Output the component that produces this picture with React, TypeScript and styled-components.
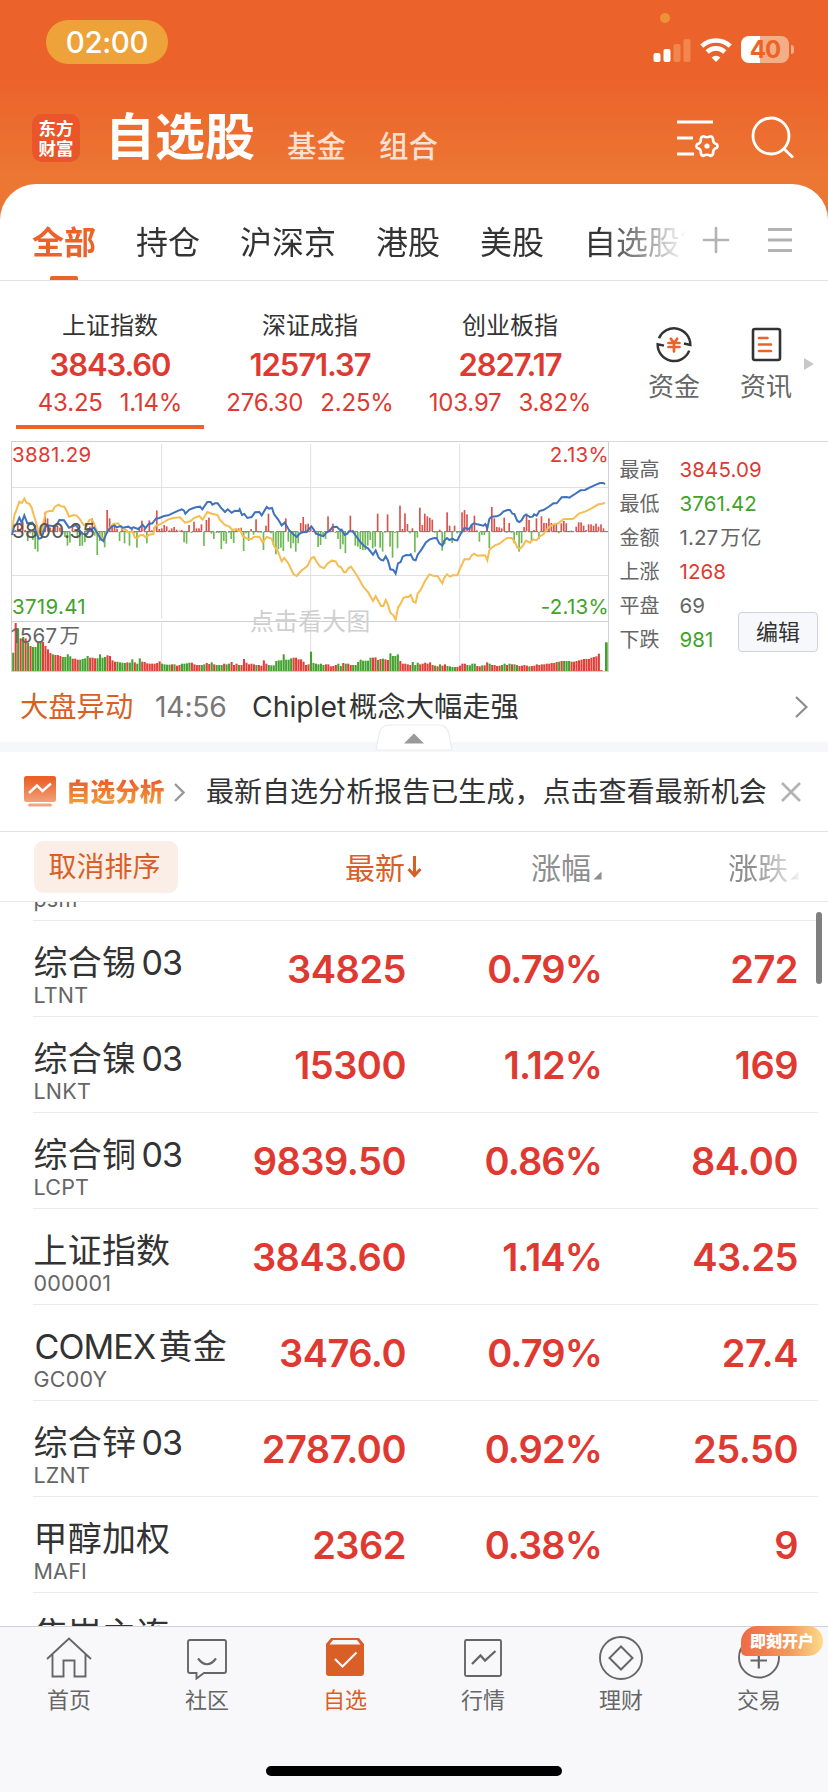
import React from 'react';
import styled, { createGlobalStyle } from 'styled-components';

const RED = '#df3a32';
const GREEN = '#42a22c';
const ORANGE = '#ec632a';
const DEEP = '#d95f27';

const Global = createGlobalStyle`
  * { box-sizing: border-box; }
  html, body { margin: 0; padding: 0; }
  body {
    width: 828px;
    height: 1792px;
    overflow: hidden;
    background: #fff;
    color: #333;
    font-family: Inter, 'Noto Sans CJK SC', sans-serif;
    font-feature-settings: 'calt' 0;
  }
  svg { display: block; flex: none; }
`;

const Screen = styled.div`
  width: 828px;
  height: 1792px;
  display: flex;
  flex-direction: column;
  overflow: hidden;
  background: linear-gradient(#ec622b 0, #ec622b 78px, #ec7733 178px, #ec7733 230px, #fff 230px);
`;

/* ---------- status bar and title bar ---------- */

const StatusBar = styled.div`
  position: relative;
  height: 84px;
  flex: none;
  display: flex;
  align-items: flex-start;
  padding: 20px 34px 0 46px;
`;

const TimePill = styled.div`
  width: 122px;
  height: 44px;
  border-radius: 22px;
  background: #eda23a;
  color: #fff;
  font-size: 29.5px;
  font-weight: 500;
  line-height: 45px;
  letter-spacing: -0.4px;
  text-align: center;
`;

const PrivacyDot = styled.i`
  position: absolute;
  left: 660px;
  top: 13px;
  width: 10px;
  height: 10px;
  border-radius: 50%;
  background: #ee9334;
`;

const StatusIcons = styled.div`
  margin-left: auto;
  display: flex;
  align-items: center;
  padding-top: 16px;
  gap: 9px;
`;

const Battery = styled.div`
  display: flex;
  align-items: center;
  gap: 2px;
`;

const BatteryBody = styled.div`
  width: 48px;
  height: 27px;
  border-radius: 8px;
  background: linear-gradient(90deg, #fff 19px, #f4ae87 19px);
  color: ${ORANGE};
  font-size: 24px;
  font-weight: 700;
  line-height: 28px;
  letter-spacing: -1px;
  text-align: center;
`;

const BatteryTip = styled.i`
  width: 3px;
  height: 9px;
  border-radius: 0 4px 4px 0;
  background: #f4ae87;
`;

const TitleBar = styled.header`
  height: 100px;
  flex: none;
  display: flex;
  align-items: flex-start;
  padding: 0 34px 0 32px;
  color: #fff;
`;

const Logo = styled.div`
  width: 48px;
  height: 48px;
  margin-top: 30px;
  border-radius: 10px;
  background: #ea5529;
  font-family: 'Noto Sans CJK SC', sans-serif;
  font-weight: 700;
  font-size: 17.5px;
  line-height: 20px;
  padding-top: 4px;
  text-align: center;
`;

const Title = styled.h1`
  margin: 18px 0 0 25px;
  font-size: 50px;
  line-height: 70px;
  font-weight: 700;
`;

const TitleLink = styled.span<{ $gap: number }>`
  margin: 40px 0 0 ${p => p.$gap}px;
  font-size: 29.5px;
  line-height: 44px;
  font-weight: 500;
  color: #fbdfd0;
`;

const TitleActions = styled.div`
  margin: 30px 0 0 auto;
  display: flex;
  gap: 32px;
`;

/* ---------- market tabs ---------- */

const Sheet = styled.main`
  flex: 1;
  min-height: 0;
  background: #fff;
  border-radius: 36px 36px 0 0;
  display: flex;
  flex-direction: column;
`;

const Tabs = styled.nav`
  height: 97px;
  flex: none;
  display: flex;
  align-items: stretch;
  border-bottom: 1px solid #e2e2e2;
  padding-left: 32px;
`;

const TabStrip = styled.div`
  width: 656px;
  display: flex;
  gap: 40px;
  overflow: hidden;
  mask-image: linear-gradient(90deg, #000 570px, transparent 655px);
`;

const Tab = styled.span<{ $active?: boolean }>`
  display: flex;
  flex-direction: column;
  align-items: center;
  flex: none;
  font-size: 32px;
  line-height: 48px;
  padding-top: 35px;
  white-space: nowrap;
  font-weight: ${p => (p.$active ? 700 : 400)};
  color: ${p => (p.$active ? ORANGE : '#333')};
`;

const TabMark = styled.i`
  width: 28px;
  height: 4px;
  margin-top: auto;
  border-radius: 2px 2px 0 0;
  background: ${ORANGE};
`;

const TabTools = styled.div`
  display: flex;
  align-items: center;
  gap: 38px;
  padding: 15px 0 0 14px;
`;

/* ---------- index cards ---------- */

const IndexRow = styled.section`
  height: 160px;
  flex: none;
  display: flex;
  padding-left: 10px;
`;

const IndexCard = styled.div`
  width: 200px;
  display: flex;
  flex-direction: column;
  align-items: center;
  padding-top: 27px;
`;

const IndexName = styled.div`
  font-size: 24px;
  line-height: 36px;
`;

const IndexValue = styled.div`
  font-size: 31px;
  line-height: 42px;
  font-weight: 600;
  letter-spacing: -1.1px;
  color: ${RED};
`;

const IndexChange = styled.div`
  display: flex;
  gap: 17px;
  font-size: 24px;
  line-height: 32px;
  margin-top: 1px;
  letter-spacing: -0.2px;
  color: ${RED};
`;

const IndexMark = styled.i`
  width: 188px;
  height: 4px;
  margin-top: 6px;
  background: ${ORANGE};
`;

const Shortcuts = styled.div`
  display: flex;
  align-items: flex-start;
  padding: 44px 0 0 18px;
`;

const Shortcut = styled.div`
  width: 92px;
  display: flex;
  flex-direction: column;
  align-items: center;
  gap: 6px;
  font-size: 26px;
  line-height: 36px;
  color: #666;
`;

const More = styled.div`
  padding-top: 33px;
  margin-left: -8px;
`;

/* ---------- intraday chart ---------- */

const Market = styled.section`
  height: 231px;
  flex: none;
  display: flex;
  border-top: 1px solid #d9d9e0;
  margin-left: 11px;
`;

const ChartBox = styled.div`
  position: relative;
  width: 598px;
  margin-top: -1px;
`;

const ChartLabel = styled.span<{ $x: number; $y: number; $right?: boolean; $color: string; $size?: number }>`
  position: absolute;
  ${p => (p.$right ? 'right' : 'left')}: ${p => p.$x}px;
  top: ${p => p.$y}px;
  font-size: ${p => p.$size ?? 20.5}px;
  line-height: 28px;
  letter-spacing: 0.3px;
  white-space: nowrap;
  color: ${p => p.$color};
`;

const Stats = styled.div`
  position: relative;
  flex: 1;
  padding: 11px 0 0 10.5px;
`;

const Stat = styled.div`
  height: 34px;
  display: flex;
  line-height: 34px;
  font-size: 20px;
`;

const StatName = styled.span`
  width: 60px;
  color: #666;
`;

const StatValue = styled.span<{ $color: string }>`
  font-size: 20.5px;
  letter-spacing: 0.1px;
  color: ${p => p.$color};
`;

const EditButton = styled.button`
  position: absolute;
  right: 10px;
  top: 170px;
  width: 80px;
  height: 40px;
  padding: 0;
  border: 1px solid #cfd2dc;
  border-radius: 4px;
  background: #f7f8fb;
  color: #333;
  font: 400 22px/37px Inter, 'Noto Sans CJK SC', sans-serif;
`;

/* ---------- news and analysis lines ---------- */

const NewsRow = styled.div`
  position: relative;
  height: 80px;
  flex: none;
  display: flex;
  align-items: center;
  padding: 0 20px 0 20px;
  border-bottom: 10px solid #f6f7fa;
  font-size: 28.3px;
  line-height: 40px;
  white-space: nowrap;
`;

const NewsTag = styled.span`
  width: 135px;
  color: ${DEEP};
`;

const NewsTime = styled.span`
  width: 97px;
  color: #777;
  letter-spacing: -0.2px;
`;

const NewsTitle = styled.span`
  flex: 1;
`;

const Handle = styled.div`
  position: absolute;
  left: 375px;
  top: 52px;
`;

const AnalysisRow = styled.div`
  height: 80px;
  flex: none;
  display: flex;
  align-items: center;
  border-bottom: 1px solid #e2e2e2;
  padding: 1px 0 0 24px;
`;

const AnalysisTag = styled.span`
  margin: 0 10px 0 9px;
  font-size: 24.6px;
  line-height: 36px;
  font-weight: 900;
  background: linear-gradient(#ec5f28 20%, #f29a3c 80%);
  -webkit-background-clip: text;
  color: transparent;
`;

const AnalysisText = styled.span`
  margin: 0 14px 0 20.5px;
  width: 561px;
  font-size: 28px;
  letter-spacing: 0.05px;
  line-height: 40px;
  white-space: nowrap;
`;

/* ---------- watch list ---------- */

const Columns = styled.div`
  height: 70px;
  flex: none;
  display: flex;
  align-items: center;
  border-bottom: 1px solid #e9e9e9;
  padding-left: 34px;
`;

const ResetSort = styled.button`
  width: 144px;
  height: 52px;
  padding: 0 3px 0 0;
  border: 0;
  border-radius: 9px;
  background: #fbeee7;
  color: ${DEEP};
  font: 400 28px/52px Inter, 'Noto Sans CJK SC', sans-serif;
`;

const ColumnHead = styled.span<{ $width: number; $active?: boolean; $fade?: boolean }>`
  width: ${p => p.$width}px;
  display: flex;
  justify-content: flex-end;
  align-items: center;
  gap: 2px;
  font-size: 30px;
  line-height: 44px;
  padding-top: 2px;
  color: ${p => (p.$active ? DEEP : '#8e8e8e')};
  ${p => (p.$fade ? 'mask-image: linear-gradient(90deg, #000 150px, transparent 204px);' : '')}
`;

const List = styled.section`
  position: relative;
  flex: 1;
  min-height: 0;
  overflow: hidden;
`;

const Rows = styled.div`
  margin: -77px 10px 0 33px;
`;

const Row = styled.div`
  height: 96px;
  display: flex;
  border-bottom: 1px solid #ebebeb;
`;

const Latin = styled.span<{ $lead?: boolean }>`
  margin-left: ${p => (p.$lead ? 0 : 0.13)}em;
  margin-right: ${p => (p.$lead ? 0.1 : 0)}em;
`;

const Names = styled.div`
  width: 200px;
  padding: 17px 0 0 0.5px;
  white-space: nowrap;
`;

const StockName = styled.div`
  font-size: 34px;
  line-height: 50px;
  letter-spacing: 0.2px;

  ${Latin} {
    letter-spacing: -0.9px;
    padding-left: ${'1px'};
  }
`;

const StockCode = styled.div`
  font-size: 21.5px;
  line-height: 26px;
  margin-top: -6px;
  letter-spacing: 0.2px;
  color: #666;
`;

const Figure = styled.div<{ $width: number; $tight?: boolean }>`
  width: ${p => p.$width}px;
  padding-top: 1px;
  text-align: right;
  font-size: 38px;
  line-height: 94px;
  font-weight: 600;
  letter-spacing: ${p => (p.$tight ? -0.9 : -0.5)}px;
  color: ${RED};
`;

const ScrollThumb = styled.i`
  position: absolute;
  left: 816px;
  top: 10px;
  width: 6px;
  height: 72px;
  border-radius: 3px;
  background: #7f7f7f;
`;

/* ---------- bottom navigation ---------- */

const BottomBar = styled.footer`
  height: 166px;
  flex: none;
  display: flex;
  flex-direction: column;
  align-items: center;
  background: #f8f8fa;
  border-top: 1px solid #d0d3dd;
`;

const NavItems = styled.div`
  display: flex;
  width: 828px;
  height: 139px;
`;

const NavItem = styled.div<{ $active?: boolean }>`
  position: relative;
  width: 138px;
  display: flex;
  flex-direction: column;
  align-items: center;
  padding-top: 7px;
  font-size: 22px;
  line-height: 32px;
  gap: 4px;
  color: ${p => (p.$active ? DEEP : '#666')};
`;

const PromoBadge = styled.span`
  position: absolute;
  left: 51px;
  top: -1px;
  width: 82px;
  height: 30px;
  border-radius: 16px 15px 15px 5px;
  background: linear-gradient(90deg, #ee6a45, #f39a5c 60%, #fbdc8c);
  color: #fff;
  font-size: 16px;
  font-weight: 900;
  line-height: 31px;
  text-align: center;
`;

const HomeIndicator = styled.i`
  width: 296px;
  height: 10px;
  border-radius: 5px;
  background: #000;
`;

/* Adds a thin gap wherever Latin text meets Chinese text. */
function Mixed({ text }: { text: string }) {
  const parts = text.split(/([A-Za-z0-9.]+)/).filter(Boolean);
  return (
    <>
      {parts.map((part, i) =>
        /[A-Za-z0-9]/.test(part) && parts.length > 1 ? <Latin key={i} $lead={i === 0}>{part}</Latin> : part,
      )}
    </>
  );
}

/* ---------- chart data: three units per pixel ---------- */

const BLUE_LINE =
  '36,297 43,270 50,263 58,245 65,260 73,238 82,262 97,260 104,270 110,295 117,308 125,305 133,280 140,268 158,270 168,270 178,252 192,253 207,275 228,267 240,285 247,293 260,295 268,282 282,275 292,292 303,309 310,315 318,295 325,282 335,272 343,268 350,274 362,270 368,275 385,272 393,277 400,274 415,279 428,266 436,277 446,264 457,262 468,248 478,246 492,240 505,238 517,232 530,226 545,220 552,224 556,233 568,221 580,216 588,214 600,212 607,220 622,198 632,198 637,206 645,202 653,202 662,214 675,228 683,220 695,230 705,224 716,225 719,220 726,237 733,234 742,246 755,243 765,229 778,228 785,238 800,213 807,218 816,216 822,234 834,250 845,268 854,260 867,282 880,295 890,303 900,292 908,289 920,288 934,271 942,282 948,293 960,297 970,301 978,291 988,285 998,273 1010,272 1020,282 1025,281 1034,297 1042,293 1048,285 1058,286 1068,300 1080,317 1092,330 1104,337 1119,356 1127,343 1136,365 1144,372 1150,373 1157,361 1164,374 1171,400 1180,402 1187,413 1194,382 1202,378 1208,362 1218,357 1228,358 1232,355 1240,371 1247,373 1253,356 1265,340 1277,320 1288,311 1300,307 1310,306 1318,322 1327,329 1333,314 1341,306 1348,312 1358,308 1364,312 1372,313 1380,297 1386,287 1393,276 1408,279 1415,266 1422,262 1432,265 1450,269 1456,264 1462,277 1468,249 1475,242 1490,241 1500,237 1510,227 1522,222 1530,222 1537,233 1543,234 1552,255 1558,258 1565,253 1572,240 1578,236 1590,243 1598,242 1602,235 1610,239 1618,225 1630,222 1645,213 1660,202 1670,202 1685,184 1700,183 1708,185 1725,174 1742,163 1755,162 1770,154 1790,145 1800,141 1810,141 1815,145';

const YELLOW_LINE =
  '36,285 43,238 50,220 58,197 66,201 73,188 80,201 88,203 95,215 102,240 110,265 117,295 122,297 130,260 138,228 148,225 158,225 163,215 168,210 176,206 184,211 193,212 200,225 207,242 220,237 230,239 240,250 250,266 260,270 268,252 275,250 282,262 290,285 300,300 310,310 318,292 330,275 340,264 355,262 363,275 370,280 378,282 385,290 397,286 405,305 412,306 420,298 430,297 437,304 447,296 460,294 466,270 480,265 492,258 505,250 520,246 540,244 555,260 572,255 582,246 598,240 608,251 622,228 635,233 653,237 660,252 675,267 688,272 697,282 708,279 715,285 720,281 728,300 742,308 755,309 762,302 778,302 788,319 800,303 815,308 822,330 832,342 845,376 853,366 866,384 880,414 890,420 900,408 910,400 922,390 934,366 942,363 950,378 960,391 972,397 982,383 995,374 1007,376 1015,390 1023,394 1032,409 1038,408 1045,397 1053,392 1062,405 1072,420 1090,452 1105,470 1119,495 1127,480 1143,510 1150,510 1157,492 1164,506 1171,530 1180,538 1187,551 1194,515 1202,503 1210,486 1218,482 1225,483 1232,477 1240,497 1247,500 1253,473 1262,462 1275,435 1288,415 1300,419 1312,420 1327,442 1333,425 1341,415 1350,422 1358,418 1372,418 1380,398 1393,370 1408,370 1415,358 1422,353 1432,359 1450,358 1456,359 1462,373 1468,343 1475,335 1485,328 1500,322 1512,312 1522,306 1535,306 1545,318 1552,335 1560,338 1568,330 1578,314 1590,320 1600,310 1610,313 1618,302 1630,295 1645,275 1660,265 1675,262 1690,250 1705,249 1720,248 1738,232 1755,227 1775,217 1795,205 1808,203 1815,200';

const STEP = 7.445;

const FLOW = [
  5, 20, 8, 30, 5, -28, -5, -25, -52, -60, -12, 20, 58, 40, 12, 5, 15, 18, 12, -8, -16, -42, -33, 18, 3, -20, -43, -42, -32, 10,
  15, 40, -12, -70, -28, -22, -47, 65, 40, 16, 22, 8, -28, 10, -35, 5, -42, 10, -5, -48, 8, 33, 10, -35, 34, 4, 14, 64, 8, 10,
  20, 16, 4, 10, 14, 6, 3, 5, -32, -36, 20, -4, 30, 10, 10, 22, -43, 35, 42, -6, -22, -4, -4, -52, -28, -36, -3, -22, -34, 10,
  10, 12, -58, -5, -28, 8, -9, 37, -3, -3, -55, 18, 54, -5, -40, -68, -52, -48, -58, 40, -30, -50, -35, -60, -35, 26, 44, 22, 24, 10,
  3, -8, -46, -40, -15, -22, 46, 8, 24, -4, -22, -52, -38, -64, -5, 48, 5, -42, -45, -52, -55, -55, -42, -25, -50, -45, 54, -48, -60, -3,
  52, -45, -78, -4, -50, 78, 8, 55, 23, -5, 10, -62, -18, 72, 20, 54, 46, 42, 36, -3, -18, 6, -57, -38, 58, 18, -34, 18, -5, -3,
  58, 65, 52, 8, 20, 48, 4, -30, -10, -10, 22, -50, 74, 40, 14, 13, 10, 42, -4, 26, -3, -35, -10, -60, -35, 14, 54, 35, -28, 5,
  40, -22, 46, 26, 26, 40, 26, 20, 25, -5, 25, 32, 25, 2, 3, 1, 15, 28, 28, 18, 5, 22, 22, 18, 24, 15, 22, 10,
];

const VOLUME = [
  55, 144, 128, 98, 102, 98, 85, 75, 72, 72, 88, 88, 87, 75, 65, 54, 50, 48, 48, 45, 42, 42, 50, 44, 37, 37, 34, 34, 36, 38,
  45, 40, 40, 38, 38, 50, 40, 42, 47, 45, 32, 28, 28, 26, 25, 24, 26, 25, 35, 26, 22, 38, 28, 27, 23, 22, 22, 22, 24, 29,
  22, 20, 19, 19, 20, 20, 16, 18, 22, 22, 23, 25, 25, 20, 18, 18, 18, 20, 24, 21, 26, 20, 18, 18, 18, 22, 20, 22, 27, 18,
  22, 18, 18, 36, 25, 20, 22, 20, 18, 18, 16, 32, 22, 18, 17, 17, 30, 32, 32, 50, 34, 34, 38, 40, 40, 35, 35, 28, 18, 20,
  58, 24, 22, 20, 22, 18, 20, 20, 14, 15, 18, 22, 15, 24, 22, 22, 18, 18, 18, 27, 34, 31, 31, 31, 40, 40, 41, 33, 36,
  37, 35, 33, 53, 45, 45, 50, 30, 22, 22, 20, 18, 27, 18, 25, 20, 22, 25, 22, 26, 18, 16, 14, 20, 16, 20, 15, 14, 12, 12,
  12, 16, 22, 22, 18, 17, 22, 22, 15, 14, 17, 17, 26, 22, 18, 18, 15, 16, 18, 22, 18, 22, 20, 20, 18, 15, 16, 18, 16, 14,
  15, 16, 20, 18, 20, 20, 22, 22, 24, 24, 27, 28, 30, 30, 30, 30, 28, 28, 30, 32, 34, 36, 36, 36, 40, 42, 44, 52, 3,
];

/* One letter per volume bar: r for a rising minute, g for a falling one. */
const VOLUME_SIDE =
  'grgrgrgrggggrrrrgrrrggggrrrggggrrrggggrrrrggggrggrggrrrrrrrrggggrgrrggggrrrrggrrgrgggrggrrrgrrrrrrgrrrrggg' +
  'gggggggrrrrrrrggggggrrrrrggrgrrggggggggrrgrgrrggggrrrrrgggrrrrrrgrgrrggggrrrrggggrrgrrgrrrrggrgrggrrrr' +
  'grrrrrrrrrrrgrgggrrrrrrrrrr';

function IntradayChart() {
  const gridX = [485, 932, 1379];
  return (
    <svg width="598" height="231" viewBox="33 15 1794 693">
      <g stroke="#dfdfe7" strokeWidth="3">
        <path d="M34 154.500H1825M34 418.500H1825" />
        {gridX.map(x => (
          <path key={x} d={`M${x} 24V549M${x} 561V705`} />
        ))}
      </g>
      <path d="M34.500 15V706.500H1825.500V15M34 556.500H1825M33 16.500H1827" fill="none" stroke="#cfcfd8" strokeWidth="3" />
      <path d="M36 287H1824" stroke="#555" strokeWidth="2.500" strokeDasharray="30 6" />
      {FLOW.map((v, i) => (
        <rect
          key={i}
          x={44 + i * STEP - 0.5}
          y={v > 0 ? 287 - v : 287}
          width="5"
          height={Math.abs(v)}
          fill={v > 0 ? '#d9534d' : '#6fb855'}
        />
      ))}
      {VOLUME.map((v, i) => (
        <rect
          key={i}
          x={36.500 + i * STEP}
          y={705 - v}
          width="6.200"
          height={v}
          fill={VOLUME_SIDE[i] === 'g' ? GREEN : '#e23f38'}
        />
      ))}
      <rect x="1815" y="619" width="8" height="86" fill={GREEN} />
      <polyline points={YELLOW_LINE} fill="none" stroke="#f6bd50" strokeWidth="6" />
      <polyline points={BLUE_LINE} fill="none" stroke="#3e72bd" strokeWidth="6" />
    </svg>
  );
}

/* ---------- icons ---------- */

const SignalIcon = () => (
  <svg width="38" height="24" viewBox="0 0 38 24">
    <rect x="0.500" y="15" width="7" height="9" rx="2" fill="#fff" />
    <rect x="10.500" y="11" width="7" height="13" rx="2" fill="#fff" />
    <rect x="20.500" y="6" width="7" height="18" rx="2" fill="#f2864f" />
    <rect x="30.500" y="1" width="7" height="23" rx="2" fill="#f2864f" />
  </svg>
);

const WifiIcon = () => (
  <svg width="32" height="24" viewBox="0 0 32 24" fill="none" stroke="#fff" strokeWidth="4.600">
    <path d="M1.800 8.200A20.500 20.500 0 0 1 30.200 8.200" />
    <path d="M7.200 14A12.500 12.500 0 0 1 24.800 14" />
    <path d="M16 24L11.600 19.500A6.300 6.300 0 0 1 20.400 19.500Z" fill="#fff" stroke="none" />
  </svg>
);

const SettingsListIcon = () => (
  <svg width="42" height="48" viewBox="0 0 42 48" fill="none" stroke="#fff" strokeWidth="2.800">
    <path d="M0 8H36M0 24H16M0 40H17" />
    <path
      d="M26.500 22.200Q30 24.400 33.500 22.200Q36.300 22.600 36.200 26.800Q36.500 29.200 40 30.300Q41 32 40 33.800Q36.500 35 36.200 37.400Q36.500 41.300 33.500 41.900Q30 39.600 26.500 41.900Q23.500 41.300 23.800 37.400Q23.500 35 20 33.800Q19 32 20 30.300Q23.500 29.200 23.800 26.800Q23.500 22.600 26.500 22.200Z"
      strokeWidth="2.600"
      strokeLinejoin="round"
    />
    <circle cx="30" cy="32" r="2.600" fill="#fff" stroke="none" />
  </svg>
);

const SearchIcon = () => (
  <svg width="43" height="48" viewBox="0 0 43 48" fill="none" stroke="#fff" strokeWidth="2.800">
    <circle cx="20" cy="22" r="18" />
    <path d="M32.500 34.500L42 43.500" />
  </svg>
);

const FundIcon = () => (
  <svg width="36" height="38" viewBox="0 0 36 38" fill="none" strokeWidth="2.500">
    <g stroke="#333">
      <path d="M3 13.300A16.300 16.300 0 0 1 34.300 19.900L28 18.500" />
      <path d="M33.200 25.600A16.300 16.300 0 0 1 1.700 19.200L8 20.600" />
    </g>
    <path d="M14.800 13.800L18 18L21.200 13.800M12.500 18H23.500M12.500 22H23.500M18 18V26.500" stroke={ORANGE} strokeWidth="2.700" strokeLinecap="round" />
  </svg>
);

const ArticleIcon = () => (
  <svg width="32" height="38" viewBox="0 0 32 38" fill="none" strokeWidth="2.600">
    <rect x="3" y="4" width="27" height="31" rx="2" stroke="#333" />
    <path d="M9 13H17.500M9 19.500H21M9 26H21" stroke={ORANGE} strokeLinecap="round" />
  </svg>
);

const ChevronIcon = ({ w, h, color, stroke }: { w: number; h: number; color: string; stroke: number }) => (
  <svg width={w} height={h} viewBox={`0 0 ${w} ${h}`} fill="none" stroke={color} strokeWidth={stroke}>
    <path d={`M1 1L${w - 1.5} ${h / 2}L1 ${h - 1}`} />
  </svg>
);

const AnalysisIcon = () => (
  <svg width="33" height="32" viewBox="0 0 33 32">
    <defs>
      <linearGradient id="analysis" x1="0" y1="0" x2="0" y2="1">
        <stop offset="0.100" stopColor="#ec5f28" />
        <stop offset="1" stopColor="#f2a179" />
      </linearGradient>
    </defs>
    <rect x="0" y="0" width="32" height="26" rx="2.500" fill="url(#analysis)" />
    <path d="M5 17L13 9.500L18.500 15L27 7.500" fill="none" stroke="#fff" strokeWidth="2.400" />
    <rect x="4" y="27.500" width="24" height="3" rx="1.500" fill="#f2a582" />
  </svg>
);

const NavSvg = ({ children }: { children: React.ReactNode }) => (
  <svg width="46" height="46" viewBox="0 0 46 46" fill="none" stroke="currentColor" strokeWidth="1.900">
    {children}
  </svg>
);

const HomeIcon = () => (
  <NavSvg>
    <path d="M1 25L23 4.500L45 25M6.500 20.500V42.500H17.500V26.500H28.500V42.500H39.500V20.500" />
  </NavSvg>
);

const ChatIcon = () => (
  <NavSvg>
    <path d="M6 6H40Q42 6 42 8V37Q42 39 40 39H20L12.500 44.500V39H6Q4 39 4 37V8Q4 6 6 6Z" />
    <path d="M14 24.500Q23 36 32 24.500" strokeWidth="2.200" />
  </NavSvg>
);

const WatchIcon = () => (
  <NavSvg>
    <path
      d="M9 4H37L42 10V39Q42 42 39 42H7Q4 42 4 39V10ZM11 6L7.500 10.500H38.500L35 6Z"
      fill="currentColor"
      fillRule="evenodd"
      stroke="none"
    />
    <path d="M13 25L20.500 32.500L34.500 18.500" stroke="#f8f8fa" strokeWidth="2.200" />
  </NavSvg>
);

const QuoteIcon = () => (
  <NavSvg>
    <rect x="5" y="6" width="36" height="36" rx="1.500" />
    <path d="M12 30L20.500 21.500L25 26.500L35.500 17" strokeWidth="2.300" />
  </NavSvg>
);

const WealthIcon = () => (
  <NavSvg>
    <circle cx="23" cy="24" r="21" />
    <path d="M23 12.500L34.500 24L23 35.500L11.500 24Z" strokeWidth="2" />
  </NavSvg>
);

const TradeIcon = () => (
  <NavSvg>
    <circle cx="23" cy="23.500" r="20" />
    <path d="M14.500 26.500H31M22.800 16V34.500" strokeWidth="2.200" />
  </NavSvg>
);

/* ---------- content ---------- */

const INDEXES = [
  { name: '上证指数', value: '3843.60', change: '43.25', percent: '1.14%', active: true },
  { name: '深证成指', value: '12571.37', change: '276.30', percent: '2.25%' },
  { name: '创业板指', value: '2827.17', change: '103.97', percent: '3.82%' },
];

const STATS = [
  ['最高', '3845.09', RED],
  ['最低', '3761.42', GREEN],
  ['金额', '1.27万亿', '#666'],
  ['上涨', '1268', RED],
  ['平盘', '69', '#666'],
  ['下跌', '981', GREEN],
];

const STOCKS = [
  ['', 'psm', '', '', ''],
  ['综合锡03', 'LTNT', '34825', '0.79%', '272'],
  ['综合镍03', 'LNKT', '15300', '1.12%', '169'],
  ['综合铜03', 'LCPT', '9839.50', '0.86%', '84.00'],
  ['上证指数', '000001', '3843.60', '1.14%', '43.25'],
  ['COMEX黄金', 'GC00Y', '3476.0', '0.79%', '27.4'],
  ['综合锌03', 'LZNT', '2787.00', '0.92%', '25.50'],
  ['甲醇加权', 'MAFI', '2362', '0.38%', '9'],
  ['焦炭主连', '', '', '', ''],
];

const NAV = [
  { label: '首页', icon: <HomeIcon /> },
  { label: '社区', icon: <ChatIcon /> },
  { label: '自选', icon: <WatchIcon />, active: true },
  { label: '行情', icon: <QuoteIcon /> },
  { label: '理财', icon: <WealthIcon /> },
  { label: '交易', icon: <TradeIcon />, badge: '即刻开户' },
];

const CornerMark = () => (
  <svg width="9" height="30" viewBox="0 0 9 30">
    <path d="M8.500 18.500V26.500H0.500Z" fill="#8e8e8e" />
  </svg>
);

export default function App() {
  return (
    <Screen>
      <Global />
      <StatusBar>
        <TimePill>02:00</TimePill>
        <PrivacyDot />
        <StatusIcons>
          <SignalIcon />
          <WifiIcon />
          <Battery>
            <BatteryBody>40</BatteryBody>
            <BatteryTip />
          </Battery>
        </StatusIcons>
      </StatusBar>

      <TitleBar>
        <Logo>东方<br />财富</Logo>
        <Title>自选股</Title>
        <TitleLink $gap={32}>基金</TitleLink>
        <TitleLink $gap={33}>组合</TitleLink>
        <TitleActions>
          <SettingsListIcon />
          <SearchIcon />
        </TitleActions>
      </TitleBar>

      <Sheet>
        <Tabs>
          <TabStrip>
            <Tab $active>全部<TabMark /></Tab>
            <Tab>持仓</Tab>
            <Tab>沪深京</Tab>
            <Tab>港股</Tab>
            <Tab>美股</Tab>
            <Tab>自选股1</Tab>
          </TabStrip>
          <TabTools>
            <svg width="28" height="28" viewBox="0 0 28 28" stroke="#b3b3b3" strokeWidth="2.600" strokeLinecap="round">
              <path d="M2 14H26M14 2V26" />
            </svg>
            <svg width="24" height="28" viewBox="0 0 24 28" stroke="#b3b3b3" strokeWidth="2.800">
              <path d="M0 3.500H24M0 14H24M0 24.500H24" />
            </svg>
          </TabTools>
        </Tabs>

        <IndexRow>
          {INDEXES.map(x => (
            <IndexCard key={x.name}>
              <IndexName>{x.name}</IndexName>
              <IndexValue>{x.value}</IndexValue>
              <IndexChange>
                <span>{x.change}</span>
                <span>{x.percent}</span>
              </IndexChange>
              {x.active && <IndexMark />}
            </IndexCard>
          ))}
          <Shortcuts>
            <Shortcut><FundIcon />资金</Shortcut>
            <Shortcut><ArticleIcon />资讯</Shortcut>
            <More>
              <svg width="10" height="12" viewBox="0 0 10 12"><path d="M0 0L10 6L0 12Z" fill="#c8c8c8" /></svg>
            </More>
          </Shortcuts>
        </IndexRow>

        <Market>
          <ChartBox>
            <ChartLabel $x={239} $y={167} $color="#cfcfcf" $size={23.8}>点击看大图</ChartLabel>
            <IntradayChart />
            <ChartLabel $x={1} $y={0} $color={RED}>3881.29</ChartLabel>
            <ChartLabel $x={0} $y={0} $right $color={RED}>2.13%</ChartLabel>
            <ChartLabel $x={1} $y={76} $color="#555">3800.35</ChartLabel>
            <ChartLabel $x={1} $y={152} $color={GREEN}>3719.41</ChartLabel>
            <ChartLabel $x={0} $y={152} $right $color={GREEN}>-2.13%</ChartLabel>
            <ChartLabel $x={0} $y={181} $color="#666"><Mixed text="1567万" /></ChartLabel>
          </ChartBox>
          <Stats>
            {STATS.map(([name, value, color]) => (
              <Stat key={name}>
                <StatName>{name}</StatName>
                <StatValue $color={color}><Mixed text={value} /></StatValue>
              </Stat>
            ))}
            <EditButton>编辑</EditButton>
          </Stats>
        </Market>

        <NewsRow>
          <NewsTag>大盘异动</NewsTag>
          <NewsTime>14:56</NewsTime>
          <NewsTitle><Mixed text="Chiplet概念大幅走强" /></NewsTitle>
          <ChevronIcon w={13} h={22} color="#8c8c8c" stroke={2.2} />
          <Handle>
            <svg width="78" height="28" viewBox="0 0 78 28">
              <path d="M1 26L4 10Q6 1 14 1H64Q72 1 74 10L77 26Z" fill="#fff" stroke="#ececf0" strokeWidth="1.200" />
              <path d="M29 19.500L39 9.500L49 19.500Z" fill="#999" />
            </svg>
          </Handle>
        </NewsRow>

        <AnalysisRow>
          <AnalysisIcon />
          <AnalysisTag>自选分析</AnalysisTag>
          <ChevronIcon w={11} h={19} color="#999" stroke={2.4} />
          <AnalysisText>最新自选分析报告已生成，点击查看最新机会</AnalysisText>
          <svg width="20" height="20" viewBox="0 0 20 20" stroke="#b3b3b3" strokeWidth="2.600">
            <path d="M1 1L19 19M19 1L1 19" />
          </svg>
        </AnalysisRow>

        <Columns>
          <ResetSort>取消排序</ResetSort>
          <ColumnHead $width={244} $active>
            最新
            <svg width="15" height="26" viewBox="0 0 15 26" fill="none" stroke={DEEP} strokeWidth="3">
              <path d="M7.500 1V20M1.500 14L7.500 20.500L13.500 14" />
            </svg>
          </ColumnHead>
          <ColumnHead $width={180}>涨幅<CornerMark /></ColumnHead>
          <ColumnHead $width={197} $fade>涨跌<CornerMark /></ColumnHead>
        </Columns>

        <List>
          <Rows>
            {STOCKS.map(([name, code, price, percent, diff], i) => (
              <Row key={i}>
                <Names>
                  <StockName>{name ? <Mixed text={name} /> : '\u00a0'}</StockName>
                  <StockCode>{code}</StockCode>
                </Names>
                <Figure $width={173}>{price}</Figure>
                <Figure $width={196} $tight>{percent}</Figure>
                <Figure $width={196}>{diff}</Figure>
              </Row>
            ))}
          </Rows>
          <ScrollThumb />
        </List>
      </Sheet>

      <BottomBar>
        <NavItems>
          {NAV.map(item => (
            <NavItem key={item.label} $active={item.active}>
              {item.icon}
              {item.label}
              {item.badge && <PromoBadge>{item.badge}</PromoBadge>}
            </NavItem>
          ))}
        </NavItems>
        <HomeIndicator />
      </BottomBar>
    </Screen>
  );
}
